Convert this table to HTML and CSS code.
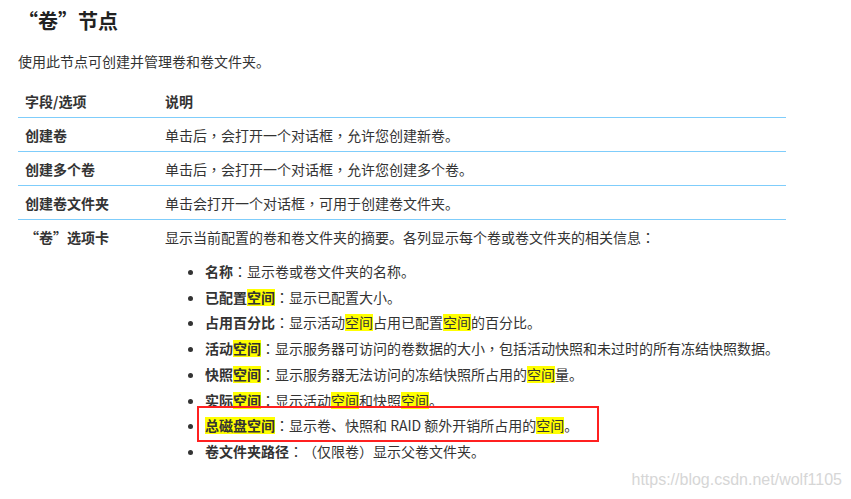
FILE: index.html
```html
<!DOCTYPE html>
<html lang="zh-CN">
<head>
    <meta charset="UTF-8">
    <title>“卷”节点</title>
    <link rel="stylesheet" href="styles.css">
</head>
<body>
    <h1 class="title">“卷”节点</h1>
    <p class="intro">使用此节点可创建并管理卷和卷文件夹。</p>

    <!-- 字段说明表 -->
    <table class="fields">
        <colgroup>
            <col class="col-name">
            <col>
        </colgroup>
        <tr class="head">
            <th>字段/选项</th>
            <th>说明</th>
        </tr>
        <tr>
            <td class="name">创建卷</td>
            <td>单击后<span class="pc" lang="zh-TW">，</span>会打开一个对话框<span class="pc" lang="zh-TW">，</span>允许您创建新卷。</td>
        </tr>
        <tr>
            <td class="name">创建多个卷</td>
            <td>单击后<span class="pc" lang="zh-TW">，</span>会打开一个对话框<span class="pc" lang="zh-TW">，</span>允许您创建多个卷。</td>
        </tr>
        <tr>
            <td class="name">创建卷文件夹</td>
            <td>单击会打开一个对话框<span class="pc" lang="zh-TW">，</span>可用于创建卷文件夹。</td>
        </tr>
        <tr class="last">
            <td class="name">“卷”选项卡</td>
            <td>
                显示当前配置的卷和卷文件夹的摘要。各列显示每个卷或卷文件夹的相关信息<span class="pc" lang="zh-TW">：</span>
                <ul class="cols">
                    <li><b>名称</b><span class="pc" lang="zh-TW">：</span>显示卷或卷文件夹的名称。</li>
                    <li><b>已配置<span class="hl">空间</span></b><span class="pc" lang="zh-TW">：</span>显示已配置大小。</li>
                    <li><b>占用百分比</b><span class="pc" lang="zh-TW">：</span>显示活动<span class="hl">空间</span>占用已配置<span class="hl">空间</span>的百分比。</li>
                    <li><b>活动<span class="hl">空间</span></b><span class="pc" lang="zh-TW">：</span>显示服务器可访问的卷数据的大小<span class="pc" lang="zh-TW">，</span>包括活动快照和未过时的所有冻结快照数据。</li>
                    <li><b>快照<span class="hl">空间</span></b><span class="pc" lang="zh-TW">：</span>显示服务器无法访问的冻结快照所占用的<span class="hl">空间</span>量。</li>
                    <li><b>实际<span class="hl">空间</span></b><span class="pc" lang="zh-TW">：</span>显示活动<span class="hl">空间</span>和快照<span class="hl">空间</span>。</li>
                    <li class="marked"><span class="box"></span><b class="hl">总磁盘空间</b><span class="pc" lang="zh-TW">：</span>显示卷、快照和 RAID 额外开销所占用的<span class="hl">空间</span>。</li>
                    <li><b>卷文件夹路径</b><span class="pc" lang="zh-TW">：</span>（仅限卷）显示父卷文件夹。</li>
                </ul>
            </td>
        </tr>
    </table>

    <div class="watermark">https://blog.csdn.net/wolf1105</div>
</body>
</html>
```

FILE: styles.css
```css
/* Page */
body {
    margin: 0;
    padding: 0 18px;
    font-family: "Noto Sans CJK SC", "Microsoft YaHei", sans-serif;
    font-size: 14px;
    text-spacing-trim: space-all;
    color: #333;
    background-color: #fff;
    position: relative;
    height: 499px;
    overflow: hidden;
}

.title {
    margin: 6px 0 0;
    font-size: 20px;
    line-height: 30px;
    font-weight: bold;
    color: #222;
}

.intro {
    margin: 15px 0 0;
    line-height: 20px;
}

/* Table */
.fields {
    width: 768px;
    margin-top: 13px;
    border-collapse: collapse;
    table-layout: fixed;
}

.col-name {
    width: 140px;
}

.fields th,
.fields td {
    padding: 7px 7px 6px;
    line-height: 20px;
    text-align: left;
    vertical-align: top;
    border-bottom: 1px solid #7fcdfb;
}

.fields th {
    font-weight: bold;
}

.fields .name {
    font-weight: bold;
}

.fields .last td {
    border-bottom: none;
}

/* centred full-width punctuation */
.pc {
    display: inline-block;
    width: 1em;
    text-align: center;
    font-family: "Noto Sans CJK TC", "Noto Sans CJK SC", sans-serif;
}

/* Column list */
.cols {
    margin: 12px 0 0;
    padding-left: 40px;
}

.cols li {
    line-height: 25.7px;
}

.cols b {
    font-weight: bold;
}

.hl {
    background-color: #ffff00;
    display: inline-block;
    line-height: 17px;
}

.marked {
    position: relative;
}

.marked .box {
    position: absolute;
    left: -8px;
    top: -7px;
    width: 398px;
    height: 32px;
    border: 2px solid #ff2020;
}

/* Watermark */
.watermark {
    position: absolute;
    right: 9px;
    bottom: 10px;
    font-family: "Liberation Sans", Arial, sans-serif;
    font-size: 16px;
    color: #d6d6d6;
}
```
